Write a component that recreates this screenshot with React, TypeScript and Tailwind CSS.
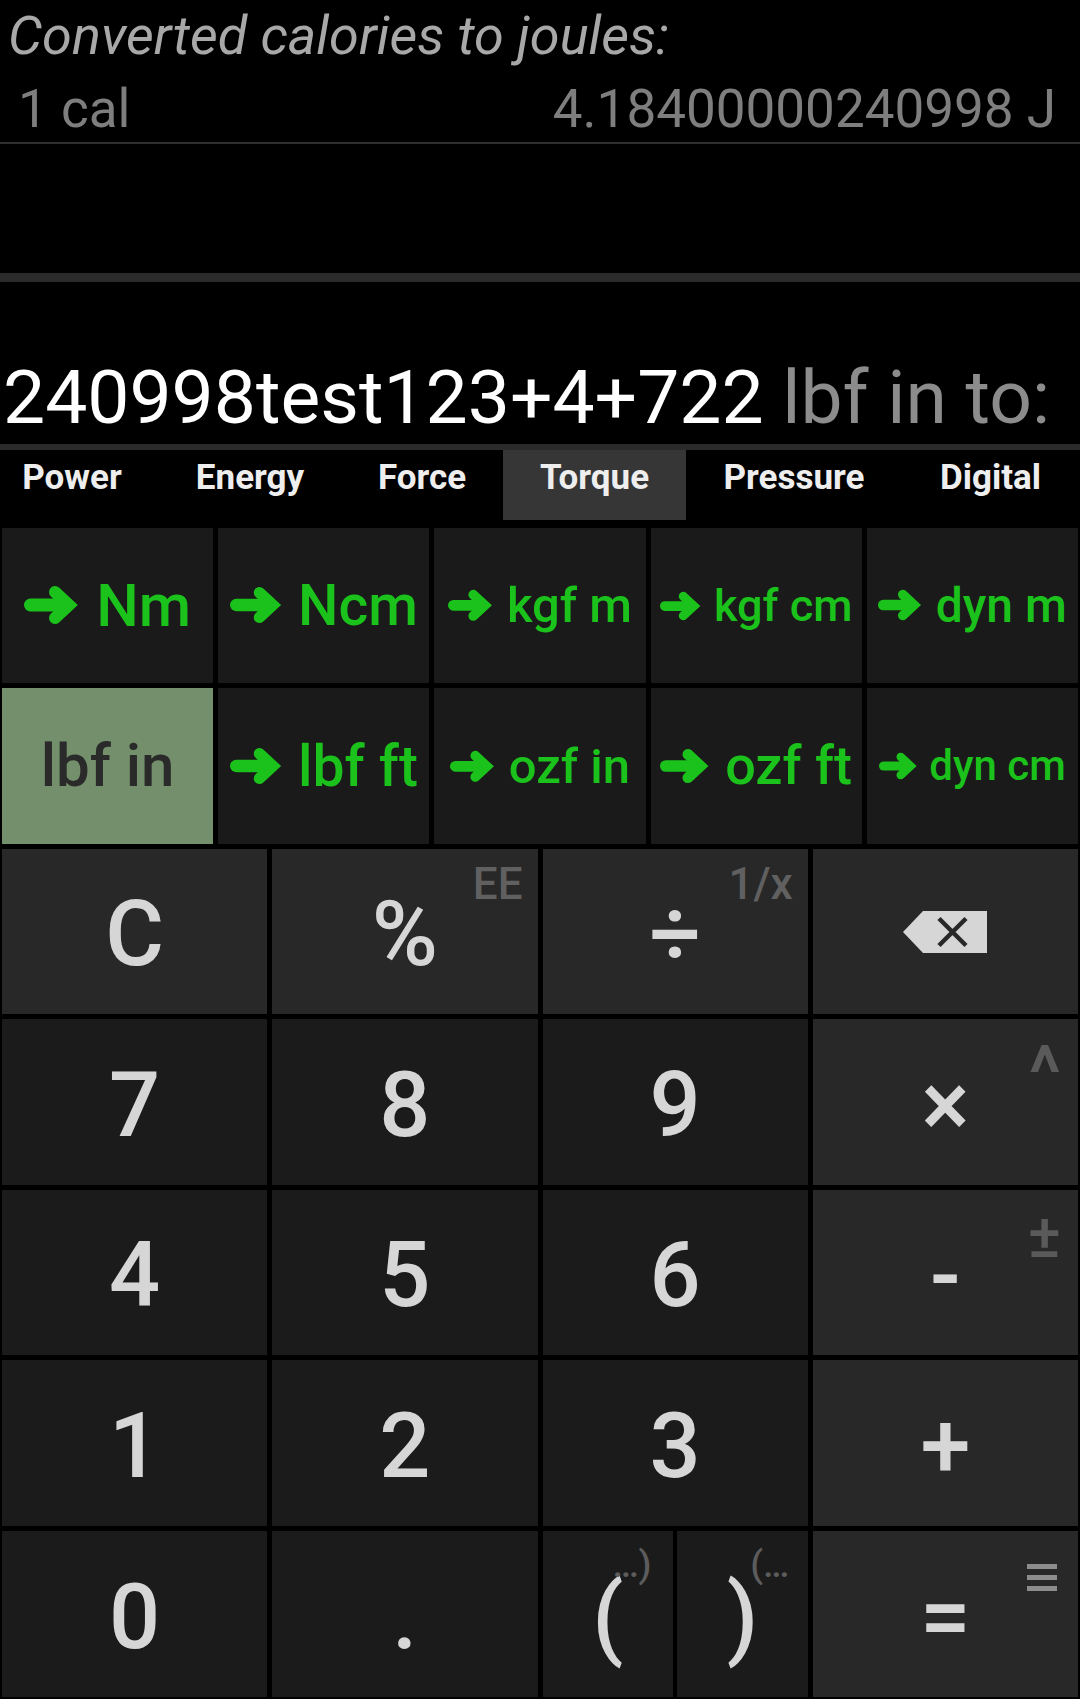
import type { ReactNode } from 'react';

const tabs = [
  { name: 'Power', w: 'w-[174px]' },
  { name: 'Energy', w: 'w-[182px]' },
  { name: 'Force', w: 'w-[162px]' },
  { name: 'Torque', w: 'w-[183px]', active: true },
  { name: 'Pressure', w: 'w-[216px]' },
  { name: 'Digital', w: 'w-[177px]' },
];

const units = [
  { label: 'Nm', size: 'text-[60px]' },
  { label: 'Ncm', size: 'text-[57px]' },
  { label: 'kgf m', size: 'text-[49px]' },
  { label: 'kgf cm', size: 'text-[45px]' },
  { label: 'dyn m', size: 'text-[48px]' },
  { label: 'lbf in', size: 'text-[60px]', active: true },
  { label: 'lbf ft', size: 'text-[57px]' },
  { label: 'ozf in', size: 'text-[49px]' },
  { label: 'ozf ft', size: 'text-[54px]' },
  { label: 'dyn cm', size: 'text-[42px]' },
];

function Arrow() {
  return (
    <svg viewBox="0 0 54 40" className="w-[0.9em] h-[0.667em] mr-[0.3em] shrink-0 overflow-visible" fill="none" stroke="currentColor">
      <line x1="6.5" y1="20" x2="40" y2="20" strokeWidth="13" strokeLinecap="round" />
      <polyline points="31,7 45,20 31,33" strokeWidth="12" strokeLinecap="round" strokeLinejoin="miter" />
    </svg>
  );
}

function Backspace() {
  return (
    <svg width="84" height="42" viewBox="0 0 84 42">
      <path d="M0 21 L20 0 H84 V42 H20 Z" fill="#d6d6d6" />
      <path d="M36 7.5 L63 34.5 M63 7.5 L36 34.5" stroke="#282828" strokeWidth="4.5" />
    </svg>
  );
}

function Key({ children, dark, corner }: { children: ReactNode; dark?: boolean; corner?: ReactNode }) {
  return (
    <div className={`relative flex items-center justify-center ${dark ? 'bg-[#1b1b1b]' : 'bg-[#282828]'}`}>
      {children}
      {corner}
    </div>
  );
}

function Glyph({ children }: { children: ReactNode }) {
  return <span className="relative pt-[7px] text-[90px] leading-none font-medium text-[#d6d6d6]">{children}</span>;
}

const cornerText = 'absolute text-[44px] leading-none font-medium text-[#606060]';

export default function App() {
  return (
    <div className="w-[1080px] h-[1699px] bg-black overflow-hidden flex flex-col font-[family-name:Roboto,sans-serif]">
      {/* Last conversion */}
      <div className="h-[72px] pt-[5px] pl-[8px] text-[54px] leading-[62px] italic text-[#a8a8a8] whitespace-nowrap">
        Converted calories to joules:
      </div>
      <div className="h-[70px] pt-[7px] pl-[18px] pr-[24px] flex justify-between text-[53px] leading-[60px] text-[#7e7e7e] whitespace-nowrap">
        <span>1 cal</span>
        <span>4.18400000240998 J</span>
      </div>
      <div className="h-[2px] bg-[#2e2e2e]" />
      <div className="h-[129px]" />
      <div className="h-[9px] bg-[#2b2b2b]" />

      {/* Expression */}
      <div className="h-[162px] flex items-end pb-[9px] pl-[3px] text-[75px] leading-none whitespace-nowrap">
        <span className="text-white">240998test123+4+722</span>
        <span className="text-[#8c8c8c]">&nbsp;lbf in to:</span>
      </div>
      <div className="h-[6px] bg-[#2b2b2b]" />

      {/* Category tabs */}
      <div className="h-[70px] flex ml-[-15px] shrink-0">
        {tabs.map((t) => (
          <div
            key={t.name}
            className={`${t.w} shrink-0 flex justify-center pt-[10px] text-[35px] leading-none font-bold text-[#eeeeee] ${t.active ? 'bg-[#363636]' : ''}`}
          >
            {t.name}
          </div>
        ))}
      </div>

      {/* Units */}
      <div className="mt-[8px] px-[2px] grid grid-cols-5 gap-[5px] grid-rows-[155px_156px]">
        {units.map((u) => (
          <div
            key={u.label}
            className={`flex items-center justify-center font-medium leading-none whitespace-nowrap ${u.size} ${u.active ? 'bg-[#748f6b] text-[#2a2a2a]' : 'bg-[#1a1a1a] text-[#1bc21b]'}`}
          >
            {!u.active && <Arrow />}
            <span>{u.label}</span>
          </div>
        ))}
      </div>

      {/* Keypad */}
      <div className="mt-[5px] px-[2px] grid grid-cols-4 gap-[5px] grid-rows-[165px_166px_165px_166px_166px]">
        <Key><Glyph>C</Glyph></Key>
        <Key corner={<span className={`${cornerText} top-[13px] right-[15px]`}>EE</span>}><Glyph>%</Glyph></Key>
        <Key corner={<span className={`${cornerText} top-[13px] right-[15px]`}>1/x</span>}><Glyph>÷</Glyph></Key>
        <Key><Backspace /></Key>

        <Key dark><Glyph>7</Glyph></Key>
        <Key dark><Glyph>8</Glyph></Key>
        <Key dark><Glyph>9</Glyph></Key>
        <Key corner={<span className="absolute top-[16px] right-[17px] text-[76px] leading-none font-medium text-[#5a5a5a]">^</span>}><Glyph>×</Glyph></Key>

        <Key dark><Glyph>4</Glyph></Key>
        <Key dark><Glyph>5</Glyph></Key>
        <Key dark><Glyph>6</Glyph></Key>
        <Key corner={<span className="absolute top-[15px] right-[17px] text-[62px] leading-none font-medium text-[#5a5a5a]">±</span>}><Glyph>-</Glyph></Key>

        <Key dark><Glyph>1</Glyph></Key>
        <Key dark><Glyph>2</Glyph></Key>
        <Key dark><Glyph>3</Glyph></Key>
        <Key><Glyph>+</Glyph></Key>

        <Key dark><Glyph>0</Glyph></Key>
        <Key dark><Glyph>.</Glyph></Key>
        <div className="grid grid-cols-2 gap-[4px]">
          <Key dark>
            <Glyph>
              (
              <span className="absolute left-full top-[-20px] ml-[-11px] text-[37px] leading-none text-[#5c5c5c]">…)</span>
            </Glyph>
          </Key>
          <Key dark>
            <Glyph>
              )
              <span className="absolute left-full top-[-20px] ml-[-8px] text-[37px] leading-none text-[#5c5c5c]">(…</span>
            </Glyph>
          </Key>
        </div>
        <Key
          corner={
            <div className="absolute top-[33px] right-[21px] w-[30px] flex flex-col gap-[6.5px]">
              <div className="h-[4.5px] bg-[#8c8c8c]" />
              <div className="h-[4.5px] bg-[#8c8c8c]" />
              <div className="h-[4.5px] bg-[#8c8c8c]" />
            </div>
          }
        >
          <Glyph>=</Glyph>
        </Key>
      </div>
    </div>
  );
}
